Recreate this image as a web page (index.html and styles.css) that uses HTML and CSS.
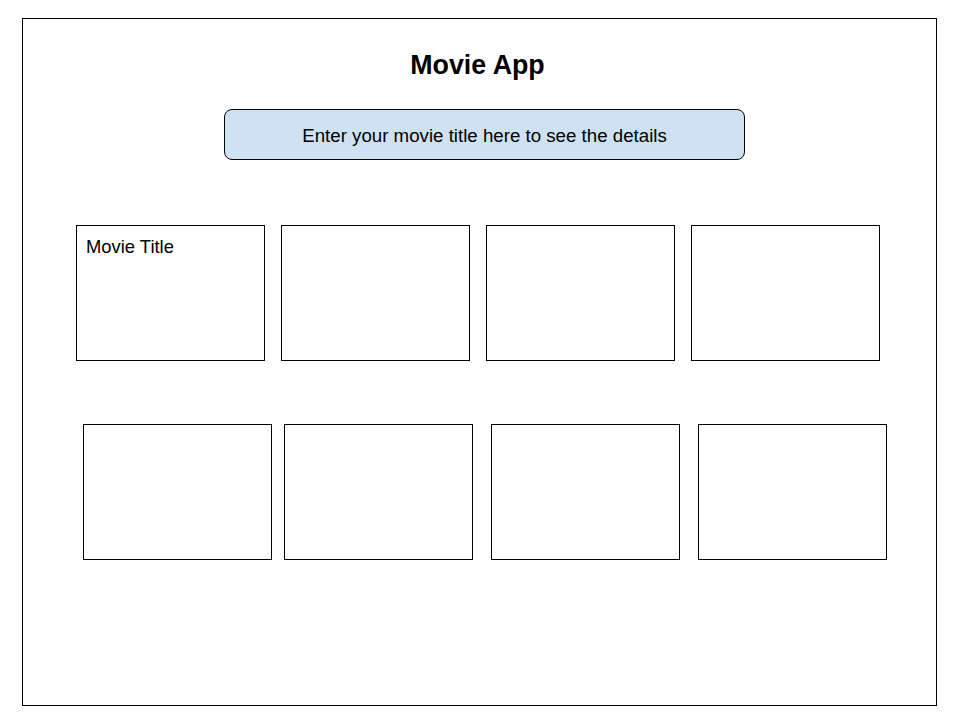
FILE: index.html
```html
<!DOCTYPE html>
<html lang="en">
<head>
<meta charset="utf-8">
<title>Movie App</title>
<link rel="stylesheet" href="styles.css">
</head>
<body>
<div class="frame">
  <h1 class="title">Movie App</h1>
  <div class="search">Enter your movie title here to see the details</div>
  <div class="row row-one">
    <div class="card"><span class="card-title">Movie Title</span></div>
    <div class="card"></div>
    <div class="card"></div>
    <div class="card"></div>
  </div>
  <div class="row row-two">
    <div class="card"></div>
    <div class="card card-tight"></div>
    <div class="card"></div>
    <div class="card"></div>
  </div>
</div>
</body>
</html>
```

FILE: styles.css
```css
* {
  box-sizing: border-box;
}

html, body {
  margin: 0;
  padding: 0;
  background: #ffffff;
}

body {
  font-family: "Liberation Sans", Arial, sans-serif;
  color: #000000;
  padding: 18px 0 0 22px;
}

.frame {
  width: 915px;
  height: 688px;
  border: 1px solid #000000;
  display: flex;
  flex-direction: column;
}

.title {
  margin: 31px 4px 0 0;
  font-size: 26.8px;
  line-height: 30px;
  font-weight: bold;
  text-align: center;
}

.search {
  margin: 29px 0 0 201px;
  width: 521px;
  height: 51px;
  border: 1px solid #000000;
  border-radius: 8px;
  background: #cfe2f3;
  display: flex;
  align-items: center;
  justify-content: center;
  font-size: 18.7px;
  padding-top: 2px;
}

.row {
  display: flex;
  gap: 16px;
}

.row-one {
  margin-top: 65px;
  padding-left: 53px;
}

.row-two {
  margin-top: 63px;
  padding-left: 60px;
  gap: 18px;
}

.card {
  width: 189px;
  height: 136px;
  border: 1px solid #000000;
  padding: 10px 0 0 9px;
  flex: none;
}

.card-tight {
  margin-left: -6px;
}

.card-title {
  font-size: 18.4px;
  line-height: 22px;
}
```
